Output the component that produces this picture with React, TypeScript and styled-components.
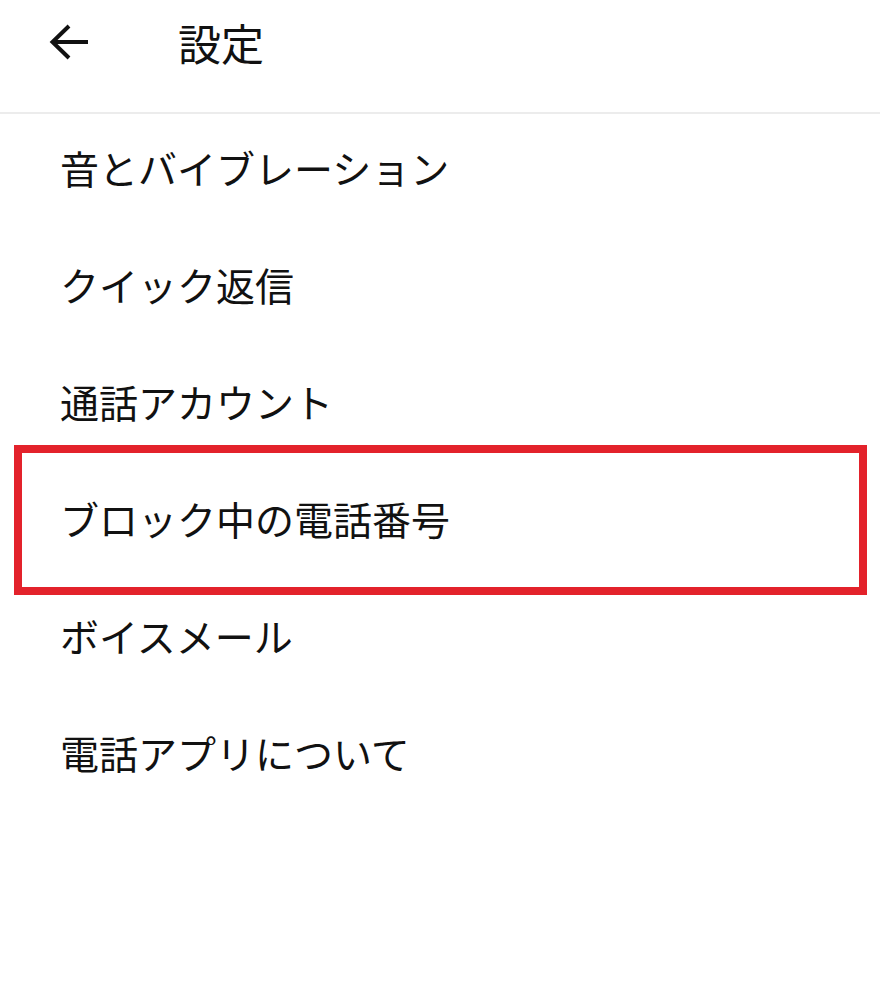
import React from 'react';
import styled, { createGlobalStyle } from 'styled-components';

const GlobalStyle = createGlobalStyle`
    html, body {
        margin: 0;
        padding: 0;
        background: #ffffff;
    }
    body {
        font-family: "Noto Sans CJK JP", "Noto Sans", sans-serif;
        color: #111111;
    }
`;

const items = [
    '音とバイブレーション',
    'クイック返信',
    '通話アカウント',
    'ブロック中の電話番号',
    'ボイスメール',
    '電話アプリについて',
];

export default function App() {
    return (
        <>
            <GlobalStyle />
            <Page>
                <Header>
                    <BackButton aria-label="戻る">
                        <svg width="40" height="38" viewBox="0 0 40 38" fill="none">
                            <line x1="3" y1="19" x2="39" y2="19" stroke="#111" strokeWidth="4" />
                            <polyline points="20,3 3.5,19 20,35" stroke="#111" strokeWidth="4" fill="none" />
                        </svg>
                    </BackButton>
                    <Title>設定</Title>
                </Header>
                <Menu>
                    {items.map((label, i) => (
                        <Row key={label}>
                            {label}
                            {i === 3 && <Highlight />}
                        </Row>
                    ))}
                </Menu>
            </Page>
        </>
    );
}

const Page = styled.div`
    width: 880px;
    min-height: 1007px;
    background: #ffffff;
`;

const Header = styled.header`
    height: 114px;
    display: flex;
    align-items: center;
    gap: 89px;
    padding-left: 49px;
    padding-bottom: 28px;
    box-sizing: border-box;
    border-bottom: 2px solid #ececec;
`;

const BackButton = styled.button`
    display: flex;
    align-items: center;
    padding: 0;
    border: none;
    background: none;
    cursor: pointer;
`;

const Title = styled.h1`
    margin: 0;
    font-size: 43px;
    font-weight: 400;
    line-height: 1;
    color: #111111;
`;

const Menu = styled.ul`
    list-style: none;
    margin: 0;
    padding: 0;
`;

const Row = styled.li`
    position: relative;
    height: 117px;
    box-sizing: border-box;
    display: flex;
    align-items: center;
    padding-left: 60px;
    padding-bottom: 10px;
    font-size: 39px;
    line-height: 1;
    color: #111111;
`;

const Highlight = styled.div`
    position: absolute;
    top: -20px;
    bottom: -13px;
    left: 14px;
    right: 13px;
    border: 8px solid #e3222b;
    pointer-events: none;
`;
